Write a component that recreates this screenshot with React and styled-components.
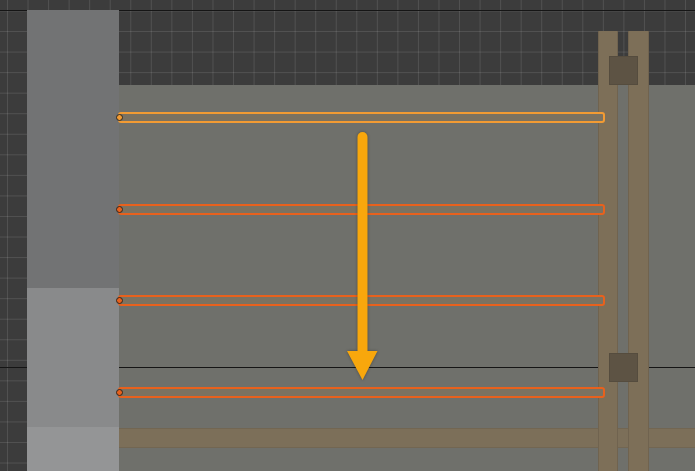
import React from 'react'
import styled, { createGlobalStyle } from 'styled-components'

const Global = createGlobalStyle`
  html, body {
    margin: 0;
    padding: 0;
    background: #3d3d3d;
    font-family: "Liberation Sans", Arial, sans-serif;
  }
`

// the grid of the viewport background
const Viewport = styled.div`
  width: 695px;
  height: 471px;
  box-sizing: border-box;
  padding-top: 10px;
  position: relative;
  overflow: hidden;
  display: flex;
  flex-direction: column;
  background-color: #3c3c3c;
  background-image:
    linear-gradient(to right, rgba(255, 255, 255, 0.11) 1px, transparent 1px),
    linear-gradient(to bottom, rgba(255, 255, 255, 0.11) 1px, transparent 1px);
  background-size: 20.55px 20.55px;
  background-position: 7px 10.5px;
`

const Scene = styled.div`
  flex: 1;
  border-top: 1px solid #151515;
  display: grid;
  grid-template-columns: 27px 92px 1fr;
  grid-template-rows: 74px 1fr;
`

const Column = styled.div`
  grid-column: 2;
  grid-row: 1 / span 2;
  margin-top: -1px;
  display: flex;
  flex-direction: column;
  position: relative;
  z-index: 2;
  box-shadow: inset -1px 0 0 rgba(0, 0, 0, 0.12);
`

const ColumnPart = styled.div`
  height: ${(p) => (p.$h ? `${p.$h}px` : 'auto')};
  flex: ${(p) => (p.$h ? 'none' : '1')};
  background: ${(p) => p.$bg};
`

const Floor = styled.div`
  grid-column: 3;
  grid-row: 2;
  position: relative;
  background: #6f706b;
`

const AxisLine = styled.div`
  position: absolute;
  left: 0;
  right: 0;
  top: 367px;
  height: 1px;
  background: #151515;
  z-index: 1;
`

const BeamH = styled.div`
  position: absolute;
  left: 0;
  right: 0;
  top: 343px;
  height: 20px;
  background: #7c6f59;
  z-index: 3;
  box-shadow: inset 0 1px 0 rgba(0, 0, 0, 0.08), inset 0 -1px 0 rgba(0, 0, 0, 0.08);
`

const Posts = styled.div`
  position: absolute;
  left: 479px;
  top: -54px;
  bottom: 0;
  z-index: 4;
  display: flex;
  gap: 10px;
`

const Post = styled.div`
  width: ${(p) => p.$w}px;
  height: 100%;
  background: #7d6f58;
  box-shadow: inset 1px 0 0 rgba(0, 0, 0, 0.1), inset -1px 0 0 rgba(0, 0, 0, 0.1);
`

const Block = styled.div`
  position: absolute;
  left: 490px;
  top: ${(p) => p.$y}px;
  width: 29px;
  height: 29px;
  z-index: 5;
  background: #5d5344;
  box-shadow: inset 0 0 0 1px rgba(0, 0, 0, 0.08);
`

const Planks = styled.div`
  position: absolute;
  left: -1px;
  top: 27px;
  width: 487px;
  z-index: 6;
  display: flex;
  flex-direction: column;
  gap: 80.6px;
`

const Plank = styled.div`
  position: relative;
  height: 11px;
  box-sizing: border-box;
  border: 2px solid ${(p) => (p.$active ? '#f29b33' : '#e8611d')};
  border-radius: 3px;
  background: #7b7261;
`

const Origin = styled.span`
  position: absolute;
  left: -4.5px;
  top: 50%;
  width: 5px;
  height: 5px;
  margin-top: -3.5px;
  border-radius: 50%;
  background: ${(p) => (p.$active ? '#f29b33' : '#e8611d')};
  border: 1px solid #2b2620;
`

const ArrowSvg = styled.svg`
  position: absolute;
  left: 221px;
  top: 40px;
  z-index: 7;
  filter: drop-shadow(0 0 1.5px rgba(0, 0, 0, 0.35));
`

function Arrow() {
  return (
    <ArrowSvg width="44" height="262" viewBox="340 125 44 262">
      <line
        x1="362.5"
        y1="137"
        x2="362.5"
        y2="353"
        stroke="#f8a70c"
        strokeWidth="10"
        strokeLinecap="round"
      />
      <polygon points="347,351 377.5,351 362.5,380" fill="#f8a70c" />
    </ArrowSvg>
  )
}

const planks = [true, false, false, false]

export default function App() {
  return (
    <>
      <Global />
      <Viewport>
        <AxisLine />
        <Scene>
          <Column>
            <ColumnPart $h={278} $bg="#727374" />
            <ColumnPart $h={139} $bg="#898a8b" />
            <ColumnPart $bg="#949596" />
          </Column>
          <Floor>
            <BeamH />
            <Posts>
              <Post $w={20} />
              <Post $w={21} />
            </Posts>
            <Block $y={-29} />
            <Block $y={268} />
            <Planks>
              {planks.map((active, i) => (
                <Plank key={i} $active={active}>
                  <Origin $active={active} />
                </Plank>
              ))}
            </Planks>
            <Arrow />
          </Floor>
        </Scene>
      </Viewport>
    </>
  )
}
